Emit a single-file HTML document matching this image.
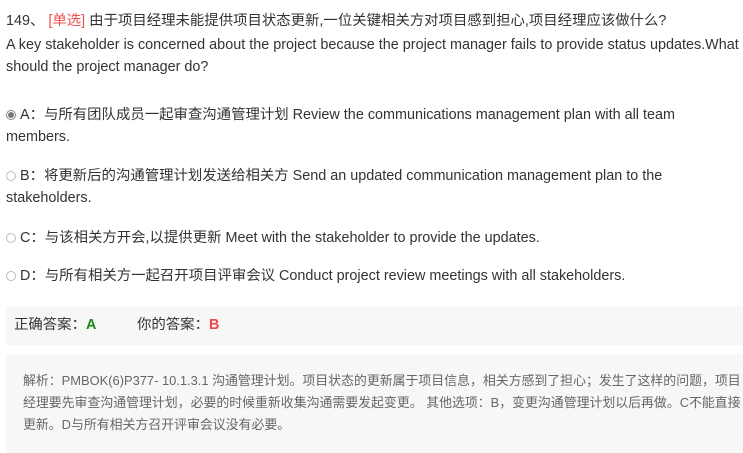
<!DOCTYPE html>
<html><head><meta charset="utf-8"><style>
body{margin:0;width:743px;height:453px;overflow:hidden;background:#fff;font-family:"Liberation Sans","Noto Sans CJK SC",sans-serif;color:#333;font-size:14.4px}
.l{position:absolute;left:6px;white-space:nowrap;line-height:22px}
.r{display:inline-block;width:10px;height:10px;border:1px solid #bbb;border-radius:50%;margin-right:4px;vertical-align:-1px;box-sizing:border-box;position:relative}
.r.on{border-color:#888;background:#fff}
.r.on:after{content:"";position:absolute;left:1px;top:1px;width:6px;height:6px;border-radius:50%;background:#777}
.box{position:absolute;left:6px;width:737px;background:#f7f7f7}
</style></head><body>
<div class="l" style="top:10px">149、 <span style="color:#f05050">[单选]</span> 由于项目经理未能提供项目状态更新,一位关键相关方对项目感到担心,项目经理应该做什么?</div>
<div class="l" style="top:34px">A key stakeholder is concerned about the project because the project manager fails to provide status updates.What</div>
<div class="l" style="top:56px">should the project manager do?</div>
<div class="l" style="top:104px"><span class="r on"></span>A：与所有团队成员一起审查沟通管理计划 Review the communications management plan with all team</div>
<div class="l" style="top:126px">members.</div>
<div class="l" style="top:165px"><span class="r"></span>B：将更新后的沟通管理计划发送给相关方 Send an updated communication management plan to the</div>
<div class="l" style="top:187px">stakeholders.</div>
<div class="l" style="top:227px"><span class="r"></span>C：与该相关方开会,以提供更新 Meet with the stakeholder to provide the updates.</div>
<div class="l" style="top:265px"><span class="r"></span>D：与所有相关方一起召开项目评审会议 Conduct project review meetings with all stakeholders.</div>
<div class="box" style="top:306px;height:39px"></div>
<div class="l" style="top:314px;left:14px">正确答案：<b style="color:#1a8a1a">A</b></div>
<div class="l" style="top:314px;left:137px">你的答案：<b style="color:#f04848">B</b></div>
<div class="box" style="top:354px;height:99px"></div>
<div style="position:absolute;left:23px;top:370px;white-space:nowrap;font-size:12.9px;line-height:22px;color:#666">解析：PMBOK(6)P377- 10.1.3.1 沟通管理计划。项目状态的更新属于项目信息，相关方感到了担心；发生了这样的问题，项目<br>经理要先审查沟通管理计划，必要的时候重新收集沟通需要发起变更。 其他选项：B，变更沟通管理计划以后再做。C不能直接<br>更新。D与所有相关方召开评审会议没有必要。</div>
</body></html>
